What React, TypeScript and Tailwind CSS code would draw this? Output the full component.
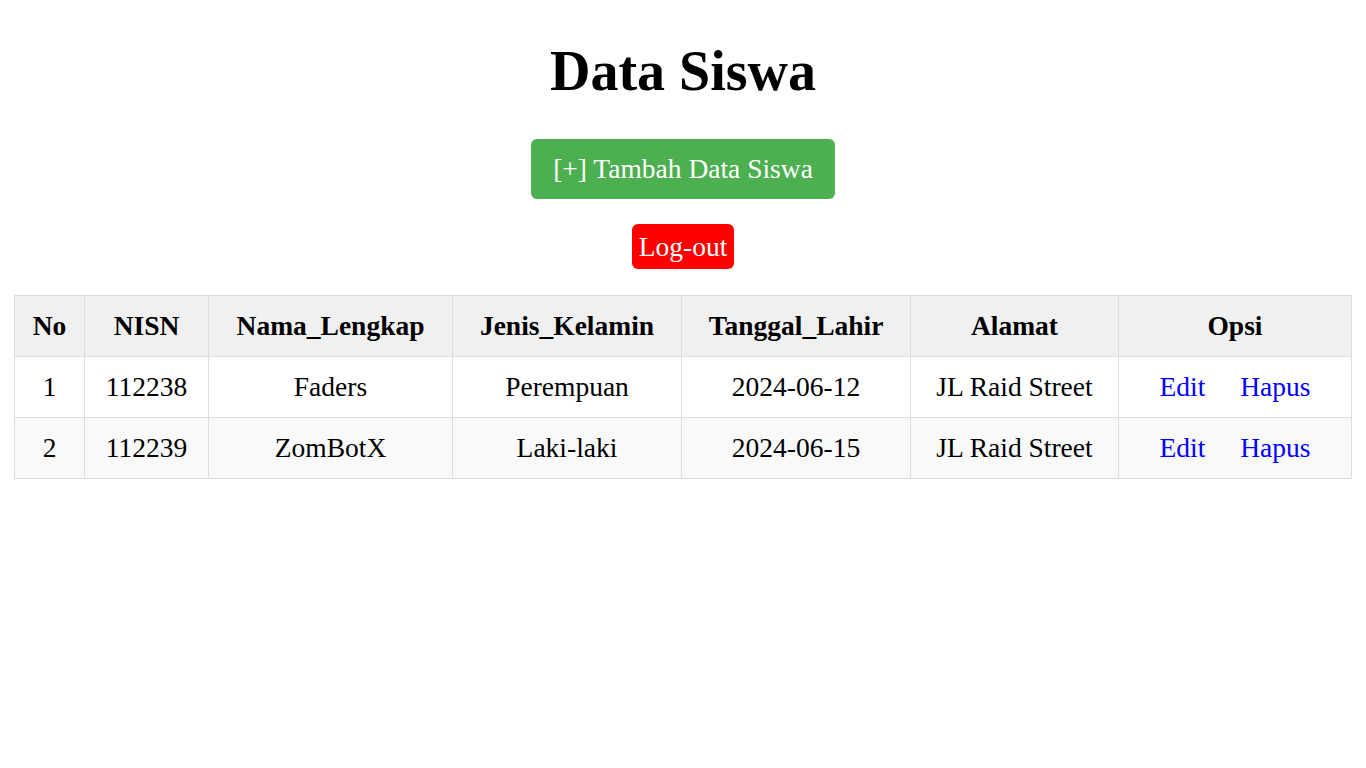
import React from "react"

type Siswa = {
  nisn: string
  nama: string
  jk: string
  lahir: string
  alamat: string
}

const dataSiswa: Siswa[] = [
  { nisn: "112238", nama: "Faders", jk: "Perempuan", lahir: "2024-06-12", alamat: "JL Raid Street" },
  { nisn: "112239", nama: "ZomBotX", jk: "Laki-laki", lahir: "2024-06-15", alamat: "JL Raid Street" },
]

const headers = ["No", "NISN", "Nama_Lengkap", "Jenis_Kelamin", "Tanggal_Lahir", "Alamat", "Opsi"]

export default function App() {
  return (
    <div className="min-h-screen bg-white text-black font-['Liberation_Serif','Times_New_Roman',serif] text-center">
      <h1 className="pt-[40px] mb-[37px] text-[56px] font-bold leading-[62px]">Data Siswa</h1>

      <div>
        <a
          href="#"
          className="inline-block rounded-[6px] bg-[#4caf50] px-[22px] py-[15px] text-[27.5px] leading-[30px] text-white"
        >
          [+] Tambah Data Siswa
        </a>
      </div>

      <div className="mt-[25px]">
        <a
          href="#"
          className="inline-block rounded-[6px] bg-[#ff0000] px-[7px] py-[7px] text-[27.5px] leading-[31px] text-white"
        >
          Log-out
        </a>
      </div>

      <table className="mx-auto mt-[26px] w-[1337px] table-fixed border-collapse text-[27.5px] leading-[30px]">
        <colgroup>
          <col className="w-[70px]" />
          <col className="w-[124px]" />
          <col className="w-[244px]" />
          <col className="w-[229px]" />
          <col className="w-[229px]" />
          <col className="w-[208px]" />
          <col className="w-[233px]" />
        </colgroup>
        <thead>
          <tr className="bg-[#f0f0f0]">
            {headers.map((h) => (
              <th key={h} className="border border-[#dddddd] py-[15px] font-bold">
                {h}
              </th>
            ))}
          </tr>
        </thead>
        <tbody>
          {dataSiswa.map((s, i) => (
            <tr key={s.nisn} className={i % 2 === 1 ? "bg-[#f9f9f9]" : "bg-white"}>
              <td className="border border-[#dddddd] py-[15px]">{i + 1}</td>
              <td className="border border-[#dddddd] py-[15px]">{s.nisn}</td>
              <td className="border border-[#dddddd] py-[15px]">{s.nama}</td>
              <td className="border border-[#dddddd] py-[15px]">{s.jk}</td>
              <td className="border border-[#dddddd] py-[15px]">{s.lahir}</td>
              <td className="border border-[#dddddd] py-[15px]">{s.alamat}</td>
              <td className="border border-[#dddddd] py-[15px]">
                <a href="#" className="mx-[14px] text-[#0000ff]">Edit</a>{" "}
                <a href="#" className="mx-[14px] text-[#0000ff]">Hapus</a>
              </td>
            </tr>
          ))}
        </tbody>
      </table>
    </div>
  )
}
